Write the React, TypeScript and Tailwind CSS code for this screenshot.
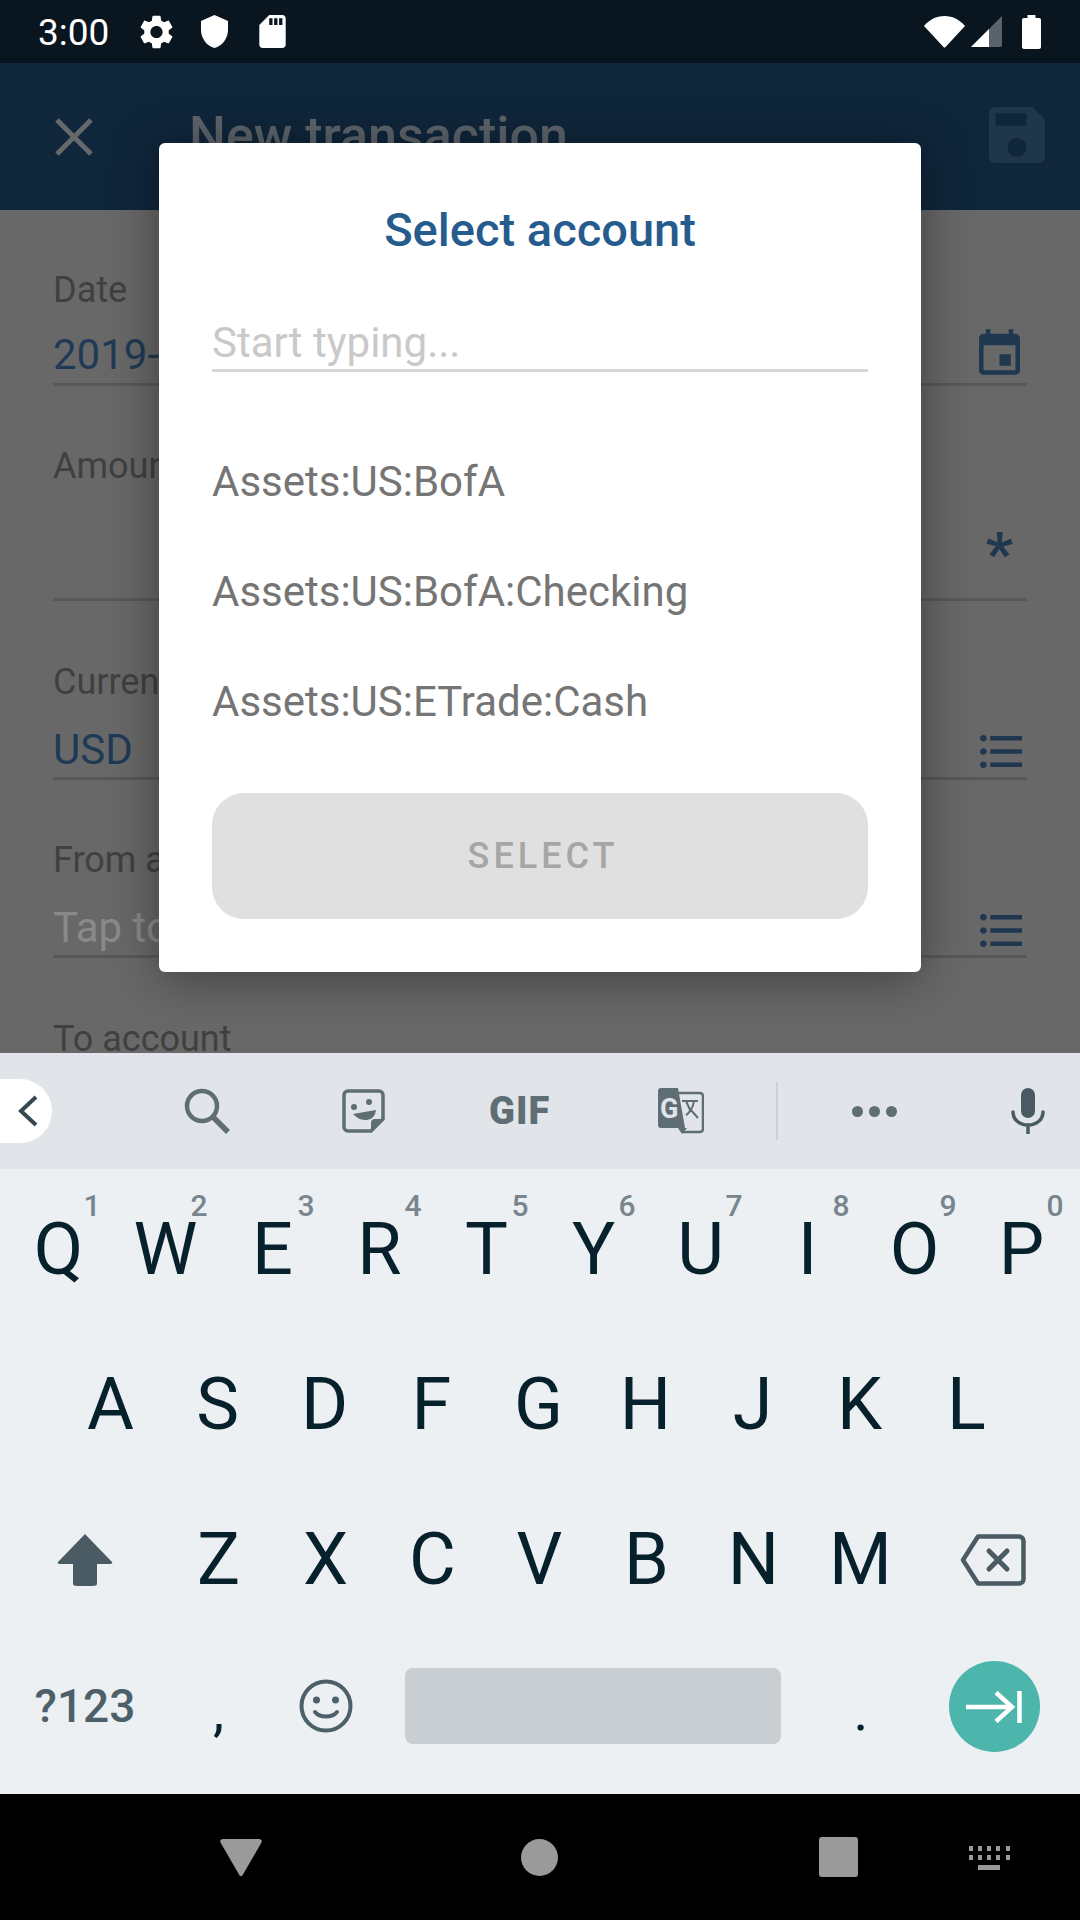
import React from 'react';

const SETTINGS =
  'M19.14 12.94c.04-.3.06-.61.06-.94 0-.32-.02-.64-.07-.94l2.03-1.58c.18-.14.23-.41.12-.61l-1.92-3.32c-.12-.22-.37-.29-.59-.22l-2.39.96c-.5-.38-1.03-.7-1.62-.94l-.36-2.54c-.04-.24-.24-.41-.48-.41h-3.84c-.24 0-.43.17-.47.41l-.36 2.54c-.59.24-1.13.57-1.62.94l-2.39-.96c-.22-.08-.47 0-.59.22L2.74 8.87c-.12.21-.08.47.12.61l2.03 1.58c-.05.3-.09.63-.09.94s.02.64.07.94l-2.03 1.58c-.18.14-.23.41-.12.61l1.92 3.32c.12.22.37.29.59.22l2.39-.96c.5.38 1.03.7 1.62.94l.36 2.54c.05.24.24.41.48.41h3.84c.24 0 .44-.17.47-.41l.36-2.54c.59-.24 1.13-.56 1.62-.94l2.39.96c.22.08.47 0 .59-.22l1.92-3.32c.12-.22.07-.47-.12-.61l-2.01-1.58zM12 15.6c-1.98 0-3.6-1.62-3.6-3.6s1.62-3.6 3.6-3.6 3.6 1.62 3.6 3.6-1.62 3.6-3.6 3.6z';
const LIST =
  'M4 10.5c-.83 0-1.5.67-1.5 1.5s.67 1.5 1.5 1.5 1.5-.67 1.5-1.5-.67-1.5-1.5-1.5zm0-6c-.83 0-1.5.67-1.5 1.5S3.17 7.5 4 7.5 5.5 6.83 5.5 6 4.83 4.5 4 4.5zm0 12c-.83 0-1.5.68-1.5 1.5s.68 1.5 1.5 1.5 1.5-.68 1.5-1.5-.67-1.5-1.5-1.5zM7 19h14v-2H7v2zm0-6h14v-2H7v2zm0-8v2h14V5H7z';

const ListIcon = ({ className }: { className: string }) => (
  <svg viewBox="2.5 4.5 18.5 15" className={`h-[33px] w-[42px] shrink-0 ${className}`} fill="#1f3850" preserveAspectRatio="none">
    <path d={LIST} />
  </svg>
);

const StatusBar = () => (
  <div className="flex h-[63px] shrink-0 items-center bg-[#09151f] pl-[38px] text-white">
    <span className="mt-[1px] w-[71px] text-[37px] leading-none">3:00</span>
    <svg viewBox="2.5 2 19 20" className="ml-[31px] h-[34px] w-[33px]" fill="#fff">
      <path d={SETTINGS} />
    </svg>
    <svg viewBox="3 1 18 22" className="ml-[28px] h-[33px] w-[27px]" fill="#fff">
      <path d="M12 1 3 5v6c0 5.55 3.84 10.74 9 12 5.16-1.26 9-6.45 9-12V5l-9-4z" />
    </svg>
    <svg viewBox="4 2 16 20" className="ml-[31px] h-[33px] w-[27px]" fill="#fff">
      <path d="M18 2h-8L4.02 8 4 20c0 1.1.9 2 2 2h12c1.1 0 2-.9 2-2V4c0-1.1-.9-2-2-2zm-6 6h-2V4h2v4zm3 0h-2V4h2v4zm3 0h-2V4h2v4z" />
    </svg>
    <svg viewBox="0 0 41 32" className="ml-auto h-[32px] w-[41px]" fill="#fff">
      <path d="M0 10C5 4 12 0 20.500 0S36 4 41 10L21.500 31c-.6.7-1.400.7-2 0z" />
    </svg>
    <svg viewBox="0 0 31 31" className="ml-[6px] h-[31px] w-[31px]">
      <path d="M0 31 31 0v29c0 1.200-.8 2-2 2z" fill="#5a636b" />
      <path d="M0 31 18 13v18z" fill="#fff" />
    </svg>
    <svg viewBox="0 0 19 34" className="ml-[20px] mr-[39px] h-[34px] w-[19px]" fill="#fff">
      <path d="M5.500 0h8v3H17c1.200 0 2 .8 2 2v27c0 1.200-.8 2-2 2H2c-1.200 0-2-.8-2-2V5c0-1.200.8-2 2-2h3.500z" />
    </svg>
  </div>
);

const AppBar = () => (
  <div className="flex h-[147px] shrink-0 items-start bg-[#10263b] shadow-[0_3px_8px_rgba(0,0,0,0.25)]">
    <svg viewBox="0 0 38 38" className="ml-[55px] mt-[55px] h-[38px] w-[38px]" stroke="#66696c" strokeWidth="5" fill="none">
      <path d="M2 2l34 34M36 2 2 36" />
    </svg>
    <span className="ml-[96px] mt-[45px] text-[52px] leading-[56px] font-medium text-[#5c636a]">New transaction</span>
    <svg viewBox="3 3 18 18" className="ml-auto mr-[35px] mt-[44px] h-[56px] w-[56px]" fill="#1f364b">
      <path d="M17 3H5c-1.110 0-2 .9-2 2v14c0 1.100.89 2 2 2h14c1.100 0 2-.9 2-2V7l-4-4zm-5 16c-1.660 0-3-1.340-3-3s1.340-3 3-3 3 1.340 3 3-1.340 3-3 3zm3-10H5V5h10v4z" />
    </svg>
  </div>
);

const Label = ({ children, className }: { children: React.ReactNode; className: string }) => (
  <div className={`text-[36px] leading-[42px] text-[#404040] ${className}`}>{children}</div>
);

const Form = () => (
  <div className="flex-1 overflow-hidden bg-[#686868] pl-[53px] pr-[53px]">
    <Label className="mt-[59px]">Date</Label>
    <div className="mt-[12px] flex h-[63px] items-start justify-between border-b-[3px] border-[#585858] pr-[7px]">
      <span className="mt-[7px] text-[42px] leading-[50px] text-[#1f3a56]">2019-</span>
      <svg viewBox="3 1 18 20" className="mt-[6px] h-[46px] w-[41px] shrink-0" fill="#1f3850">
        <path d="M17 12h-5v5h5v-5zM16 1v2H8V1H6v2H5c-1.110 0-1.990.9-1.990 2L3 19c0 1.100.89 2 2 2h14c1.100 0 2-.9 2-2V5c0-1.100-.9-2-2-2h-1V1h-2zm3 18H5V8h14v11z" />
      </svg>
    </div>
    <Label className="mt-[59px]">Amount</Label>
    <div className="flex h-[114px] items-center justify-end border-b-[3px] border-[#585858] pr-[14px]">
      <span className="mt-[22px] text-[60px] leading-none font-bold text-[#1f3850]">*</span>
    </div>
    <Label className="mt-[60px]">Currency</Label>
    <div className="mt-[11px] flex h-[66px] items-center justify-between border-b-[3px] border-[#585858] pr-[5px]">
      <span className="mt-[8px] text-[42px] leading-[50px] text-[#1f3a56]">USD</span>
      <ListIcon className="mt-[11px]" />
    </div>
    <Label className="mt-[59px]">From account</Label>
    <div className="mt-[10px] flex h-[67px] items-center justify-between border-b-[3px] border-[#585858] pr-[5px]">
      <span className="mt-[9px] text-[42px] leading-[50px] text-[#8a8a8a]">Tap to select</span>
      <ListIcon className="mt-[14px]" />
    </div>
    <Label className="mt-[60px]">To account</Label>
  </div>
);

const AccountDialog = () => (
  <div className="absolute left-[159px] top-[143px] flex h-[829px] w-[762px] flex-col rounded-[6px] bg-white px-[53px] shadow-[0_6px_50px_rgba(0,0,0,0.4)]">
    <div className="mt-[59px] text-center text-[47px] leading-[56px] font-medium text-[#265b8e]">Select account</div>
    <div className="mt-[54px] h-[60px] border-b-[3px] border-[#d6d6d6] text-[42px] leading-[62px] text-[#c9c9c9]">Start typing...</div>
    <div className="mt-[85px] flex flex-col gap-[60px] text-[42px] leading-[50px] text-[#757575]">
      <div>Assets:US:BofA</div>
      <div>Assets:US:BofA:Checking</div>
      <div>Assets:US:ETrade:Cash</div>
    </div>
    <div className="mt-[66px] flex h-[126px] items-center justify-center rounded-[32px] bg-[#e0e0e0] pl-[6px] text-[36px] font-medium tracking-[4px] text-[#a6a6a6]">SELECT</div>
  </div>
);

const Toolbar = () => (
  <div className="flex h-[116px] shrink-0 items-center bg-[#e1e5e9]">
    <div className="flex h-[64px] w-[52px] items-center rounded-r-[32px] bg-white pl-[18px]">
      <svg viewBox="0 0 20 32" className="h-[32px] w-[20px]" fill="none" stroke="#37474f" strokeWidth="4">
        <path d="M18 2 3 16l15 14" />
      </svg>
    </div>
    <svg viewBox="0 0 46 46" className="ml-[132px] h-[46px] w-[46px]" fill="none" stroke="#5f6d74" strokeWidth="4.500">
      <circle cx="18" cy="18" r="15" />
      <path d="m29 29 15 15" strokeWidth="5.500" />
    </svg>
    <svg viewBox="0 0 43 44" className="ml-[112px] h-[44px] w-[43px]">
      <path d="M6 2h31a4 4 0 0 1 4 4v24L29 42H6a4 4 0 0 1-4-4V6a4 4 0 0 1 4-4z" fill="none" stroke="#5f6d74" strokeWidth="3.500" />
      <path d="M29 42V34a4 4 0 0 1 4-4h8z" fill="#5f6d74" />
      <circle cx="12" cy="18" r="3" fill="#5f6d74" />
      <circle cx="27" cy="13" r="3" fill="#5f6d74" />
      <path d="M11 25l23-4c-1 8-6 10-11 10-5 0-9-3-12-6z" fill="#5f6d74" />
    </svg>
    <span className="ml-[104px] w-[62px] text-[38px] leading-none font-black tracking-[1px] text-[#5f6d74]">GIF</span>
    <svg viewBox="0 0 46 46" className="ml-[107px] h-[46px] w-[46px]">
      <path d="M20 5h22a3 3 0 0 1 3 3v33a3 3 0 0 1-3 3H24" fill="none" stroke="#5f6d74" strokeWidth="2.500" />
      <path d="M3 0h17l7 40H3a3 3 0 0 1-3-3V3a3 3 0 0 1 3-3z" fill="#5f6d74" />
      <path d="M20 40h9l-5 6z" fill="#5f6d74" />
      <text x="2" y="30" fontSize="27" fontWeight="700" fill="#e1e5e9" fontFamily="Roboto, sans-serif">G</text>
      <path d="M24 13h16M28 13l5 11M36 13c-1 8-6 13-8 14M32 21l8 9" fill="none" stroke="#5f6d74" strokeWidth="2" />
    </svg>
    <div className="ml-[72px] h-[58px] w-[2px] bg-[#cdd1d5]" />
    <div className="ml-[74px] flex gap-[6px]">
      <div className="h-[11px] w-[11px] rounded-full bg-[#5f6d74]" />
      <div className="h-[11px] w-[11px] rounded-full bg-[#5f6d74]" />
      <div className="h-[11px] w-[11px] rounded-full bg-[#5f6d74]" />
    </div>
    <svg viewBox="0 0 34 46" className="ml-[114px] h-[46px] w-[34px]">
      <rect x="10" y="0" width="14" height="30" rx="7" fill="#4a5a63" />
      <path d="M2 24c0 8 7 13 15 13s15-5 15-13M17 37v8" fill="none" stroke="#4a5a63" strokeWidth="3.500" strokeLinecap="round" />
    </svg>
  </div>
);

const Key = ({ k, hint }: { k: string; hint?: string }) => (
  <div className="relative flex w-[107px] items-center justify-center text-[72px] leading-none text-[#06202c]">
    {k}
    {hint && (
      <span className="absolute right-[5px] top-[18px] w-[30px] text-center text-[30px] leading-[30px] font-medium text-[#78858d]">
        {hint}
      </span>
    )}
  </div>
);

const Keyboard = () => (
  <div className="flex h-[625px] shrink-0 flex-col bg-[#ecf0f3] pt-[4px]">
    <div className="flex h-[154px] px-[5px]">
      <Key k="Q" hint="1" />
      <Key k="W" hint="2" />
      <Key k="E" hint="3" />
      <Key k="R" hint="4" />
      <Key k="T" hint="5" />
      <Key k="Y" hint="6" />
      <Key k="U" hint="7" />
      <Key k="I" hint="8" />
      <Key k="O" hint="9" />
      <Key k="P" hint="0" />
    </div>
    <div className="flex h-[155px] px-[57px]">
      {['A', 'S', 'D', 'F', 'G', 'H', 'J', 'K', 'L'].map((k) => (
        <Key key={k} k={k} />
      ))}
    </div>
    <div className="flex h-[155px] px-[5px]">
      <div className="flex w-[160px] items-center justify-center">
        <svg viewBox="0 0 28 52" className="h-[52px] w-[56px]" fill="#4a5b63" preserveAspectRatio="none">
          <path d="M14 0 27.500 28c.4 1 0 2-1 2H20v20c0 1-.8 2-2 2h-8c-1.200 0-2-1-2-2V30H1.500c-1 0-1.400-1-1-2z" />
        </svg>
      </div>
      {['Z', 'X', 'C', 'V', 'B', 'N', 'M'].map((k) => (
        <Key key={k} k={k} />
      ))}
      <div className="flex w-[158px] items-center justify-center">
        <svg viewBox="0 0 66 52" className="h-[52px] w-[66px]" fill="none" stroke="#4a5b63" strokeWidth="4.500">
          <path d="M18 2.500h41a4.500 4.500 0 0 1 4.500 4.500v38a4.500 4.500 0 0 1-4.500 4.500H18L3 26z" strokeLinejoin="round" />
          <path d="m29 17 18 18M47 17 29 35" strokeWidth="5" strokeLinecap="round" />
        </svg>
      </div>
    </div>
    <div className="flex h-[138px] items-center px-[5px]">
      <div className="w-[160px] text-center text-[46px] font-medium text-[#4d5f68]">?123</div>
      <div className="w-[107px] pt-[10px] text-center text-[56px] leading-none text-[#06202c]">,</div>
      <div className="flex w-[107px] justify-center">
        <svg viewBox="0 0 54 54" className="h-[54px] w-[54px]" fill="none" stroke="#4d5f68" strokeWidth="4">
          <circle cx="27" cy="27" r="24.500" />
          <circle cx="17.500" cy="21" r="3.500" fill="#4d5f68" stroke="none" />
          <circle cx="36.500" cy="21" r="3.500" fill="#4d5f68" stroke="none" />
          <path d="M16 33c5 6 17 6 22 0" strokeLinecap="round" strokeWidth="4" />
        </svg>
      </div>
      <div className="mx-[26px] h-[76px] w-[376px] rounded-[8px] bg-[#c9ced2]" />
      <div className="w-[108px] pt-[10px] text-center text-[56px] leading-none text-[#06202c]">.</div>
      <div className="flex w-[158px] justify-center">
        <div className="mt-[1px] flex h-[91px] w-[91px] items-center justify-center rounded-full bg-[#4db6ac]">
          <svg viewBox="0 0 56 32" className="h-[32px] w-[56px]" fill="none" stroke="#fff" strokeWidth="4.500">
            <path d="M0 16h46M30 1.500 46 16 30 30.500M53.500 0v32" />
          </svg>
        </div>
      </div>
    </div>
  </div>
);

const NavBar = () => (
  <div className="flex h-[126px] shrink-0 items-center bg-black pl-[220px]">
    <svg viewBox="0 0 42 37" className="h-[37px] w-[42px]" fill="#9a9a9a">
      <path d="M3 0h36c2.500 0 3.500 2 2.200 4L23 35.500c-1 2-3 2-4 0L.8 4C-.5 2 .5 0 3 0z" />
    </svg>
    <div className="ml-[259px] h-[37px] w-[37px] rounded-full bg-[#9a9a9a]" />
    <div className="ml-[261px] h-[40px] w-[39px] rounded-[3px] bg-[#9a9a9a]" />
    <svg viewBox="0 0 41 24" className="ml-[111px] mt-[1px] h-[24px] w-[41px]" fill="#9a9a9a">
      <path d="M0 0h4v5H0zM9 0h4v5H9zM18 0h4v5h-4zM27 0h4v5h-4zM37 0h4v5h-4zM0 9h4v5H0zM9 9h4v5H9zM18 9h4v5h-4zM27 9h4v5h-4zM37 9h4v5h-4zM9 19h22v5H9z" />
    </svg>
  </div>
);

export default function App() {
  return (
    <div className="relative flex h-[1920px] w-[1080px] flex-col overflow-hidden font-[Roboto,sans-serif]">
      <StatusBar />
      <AppBar />
      <Form />
      <AccountDialog />
      <Toolbar />
      <Keyboard />
      <NavBar />
    </div>
  );
}
